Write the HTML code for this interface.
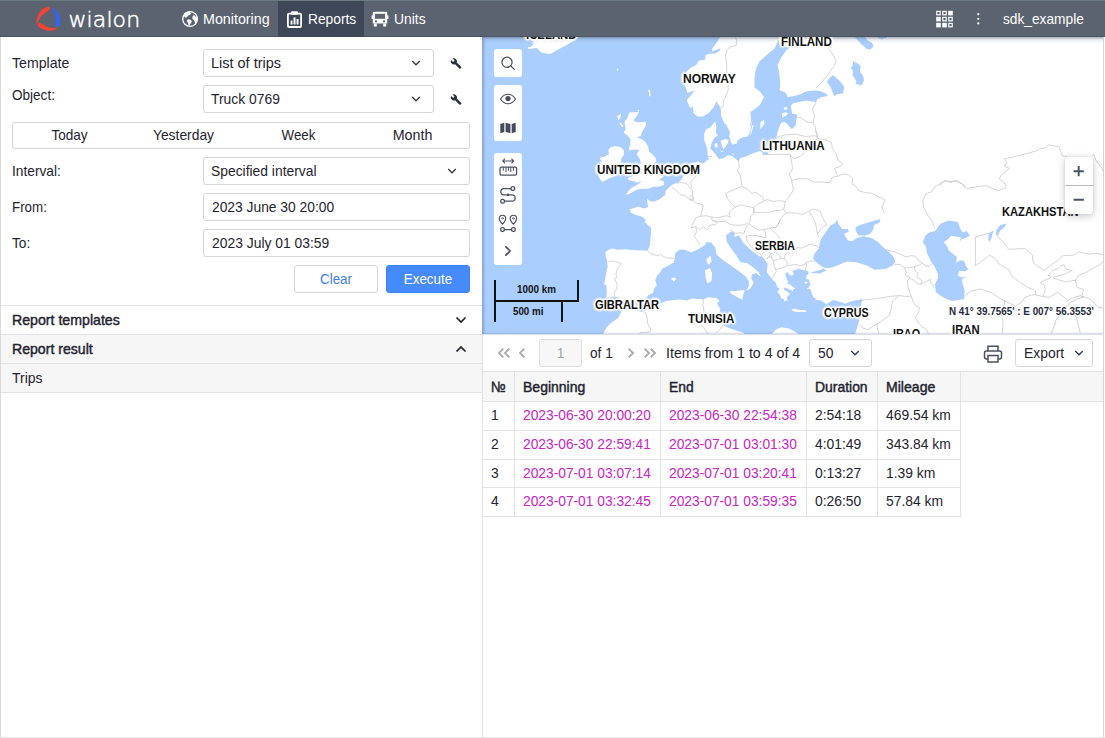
<!DOCTYPE html>
<html lang="en">
<head>
<meta charset="utf-8">
<title>Wialon</title>
<style>
*{box-sizing:border-box;margin:0;padding:0}
html,body{width:1105px;height:738px;overflow:hidden;background:#fff}
body{font-family:"Liberation Sans",sans-serif;font-size:14px;color:#1f2430;position:relative}
.abs{position:absolute}
.t{position:absolute;white-space:nowrap;line-height:16px;height:16px}
#hdr{position:absolute;left:0;top:0;width:1105px;height:37px;z-index:5;background:#5b6270;border-top:1px solid #6b7a82;border-bottom:1px solid #4e5562}
#hdr .t{color:#fff}
#tabact{position:absolute;left:278px;top:0;width:86px;height:36px;background:#3e4758}
.box{position:absolute;border:1px solid #d6d6d6;border-radius:3px;background:#fff}
.hl{position:absolute;height:1px;background:#e2e3e6}
.vl{position:absolute;width:1px;background:#e2e3e6}
#map{position:absolute;left:482px;top:37px;width:623px;height:297px;background:#aacefd;overflow:hidden}
.mbtn{position:absolute;left:12px;width:28px;background:#fff;border-radius:3px}
.lbl{position:absolute;transform-origin:0 0;white-space:nowrap;font-weight:bold;font-size:12px;line-height:14px;color:#111;text-shadow:-1px -1px 1px #fff,1px -1px 1px #fff,-1px 1px 1px #fff,1px 1px 1px #fff,0 -2px 2px #fff,0 2px 2px #fff,-2px 0 2px #fff,2px 0 2px #fff,0 0 4px #fff,0 0 3px #fff}
.pink{color:#d325c2}
.gr{background:#f6f6f6}
.md{font-weight:normal;-webkit-text-stroke:0.45px #1f2430}
</style>
</head>
<body>

<div id="hdr">
<div id="tabact"></div>
<svg class="abs" style="left:30px;top:1px" width="40" height="34" viewBox="0 0 868 738">
  <path d="M432 108 C370 95 290 130 215 215 C160 290 135 380 140 465 C160 470 172 455 178 440 C190 380 230 310 300 255 C350 215 410 190 430 165 C440 145 440 125 432 108 Z" fill="#f84330"/>
  <path d="M438 108 C500 130 580 190 630 290 C660 370 660 460 640 505 C620 535 585 540 565 520 C545 495 550 460 562 420 C570 340 540 240 480 165 C462 140 445 122 438 108 Z" fill="#2f63fb"/>
  <path d="M160 490 C165 465 195 452 225 458 C270 475 320 525 400 552 C470 572 550 570 602 552 C570 595 500 625 420 625 C330 620 250 590 190 545 C168 525 158 508 160 490 Z" fill="#f84330"/>
</svg>
<div class="t" id="logo" style="left:68.5px;top:3.5px;height:30px;line-height:30px;font-family:'DejaVu Sans',sans-serif;font-size:22px;font-weight:200;letter-spacing:0.1px;-webkit-text-stroke:0.55px #fff">wialon</div>

<svg class="abs" style="left:181px;top:9px" width="18" height="18" viewBox="0 0 18 18">
  <circle cx="9.08" cy="9.03" r="7.35" fill="none" stroke="#fff" stroke-width="1.3"/>
  <path d="M2.92 4.10 L4.15 2.51 L6.62 1.81 L9.08 2.16 L9.96 3.57 L9.08 4.80 L7.32 5.51 L6.62 6.56 L5.21 6.92 L5.56 7.97 L4.15 7.62 L3.10 6.21 Z M6.27 9.73 L8.03 9.20 L9.79 10.08 L10.85 11.14 L10.14 12.90 L9.08 14.31 L8.56 15.72 L7.50 15.37 L6.97 12.90 L6.09 11.14 Z M11.55 6.56 L12.61 5.15 L14.01 5.51 L14.72 6.92 L15.77 7.62 L16.13 10.08 L15.42 12.55 L14.37 13.96 L13.66 11.85 L12.61 10.08 L11.37 8.68 Z" fill="#fff"/>
</svg>
<div class="t" style="left:203px;top:10px;font-size:15px;transform:translateY(-.3px) scaleX(0.951);transform-origin:0 50%">Monitoring</div>

<svg class="abs" style="left:286px;top:9px" width="17" height="18" viewBox="0 0 17 18">
  <rect x="1.9" y="3.6" width="13.2" height="13.4" rx="1" fill="none" stroke="#fff" stroke-width="1.8"/>
  <rect x="5" y="1.2" width="7" height="3.6" rx="1" fill="#fff"/>
  <rect x="4.6" y="10.5" width="1.9" height="4" fill="#fff"/>
  <rect x="7.6" y="7.4" width="1.9" height="7.1" fill="#fff"/>
  <rect x="10.6" y="9" width="1.9" height="5.5" fill="#fff"/>
</svg>
<div class="t" style="left:308px;top:10px;font-size:15px;transform:translateY(-.3px) scaleX(0.918);transform-origin:0 50%">Reports</div>

<svg class="abs" style="left:371px;top:10px" width="18" height="17" viewBox="0 0 18 17">
  <path d="M3.2 0.8 H14.8 C15.7 0.8 16.2 1.4 16.2 2.2 V12.6 H1.8 V2.2 C1.8 1.4 2.3 0.8 3.2 0.8 Z" fill="#fff"/>
  <rect x="3.9" y="2.8" width="10.2" height="5" fill="#5b6270"/>
  <rect x="0.6" y="4.4" width="1.4" height="3.6" fill="#fff"/>
  <rect x="16" y="4.4" width="1.4" height="3.6" fill="#fff"/>
  <circle cx="5" cy="10.3" r="1.1" fill="#5b6270"/>
  <circle cx="13" cy="10.3" r="1.1" fill="#5b6270"/>
  <rect x="2.8" y="12.4" width="3" height="3.2" rx="0.5" fill="#fff"/>
  <rect x="12.2" y="12.4" width="3" height="3.2" rx="0.5" fill="#fff"/>
</svg>
<div class="t" style="left:394px;top:10px;font-size:15px;transform:translateY(-.3px) scaleX(0.925);transform-origin:0 50%">Units</div>

<svg class="abs" style="left:935px;top:8px" width="19" height="19" viewBox="0 0 19 19">
  <g fill="none" stroke="#fff" stroke-width="1.2">
    <rect x="1.8" y="2.4" width="3.4" height="3.4"/><rect x="7.8" y="2.4" width="3.4" height="3.4"/>
    <rect x="7.8" y="8.4" width="3.4" height="3.4"/><rect x="13.8" y="8.4" width="3.4" height="3.4"/>
    <rect x="13.8" y="14.4" width="3.4" height="3.4"/>
  </g>
  <g fill="#fff">
    <rect x="13.2" y="1.8" width="4.6" height="4.6"/>
    <rect x="1.2" y="7.8" width="4.6" height="4.6"/>
    <rect x="1.2" y="13.8" width="4.6" height="4.6"/><rect x="7.2" y="13.8" width="4.6" height="4.6"/>
  </g>
</svg>
<svg class="abs" style="left:975px;top:10px" width="6" height="18" viewBox="0 0 6 18">
  <circle cx="3.3" cy="3.2" r="1.15" fill="#fff"/><circle cx="3.3" cy="7.8" r="1.15" fill="#fff"/><circle cx="3.3" cy="12.4" r="1.15" fill="#fff"/>
</svg>
<div class="t" style="left:1003px;top:10px;font-size:15px;transform:translateY(-.3px) scaleX(0.915);transform-origin:0 50%">sdk_example</div>
</div>

<div id="left" class="abs" style="left:0;top:36px;width:482px;height:702px;background:#fff">
<div class="t" style="left:12px;top:19px;font-size:15px;transform:translateY(-.3px) scaleX(0.943);transform-origin:0 50%">Template</div>
<div class="t" style="left:12px;top:51px;font-size:15px;transform:translateY(-.3px) scaleX(0.903);transform-origin:0 50%">Object:</div>
<div class="box" style="left:203px;top:13px;width:231px;height:28px"></div>
<div class="t" style="left:211px;top:19px;font-size:15px;transform:translateY(-.3px) scaleX(0.965);transform-origin:0 50%">List of trips</div>
<div class="box" style="left:203px;top:49px;width:231px;height:28px"></div>
<div class="t" style="left:211px;top:55px;font-size:15px;transform:translateY(-.3px) scaleX(0.925);transform-origin:0 50%">Truck 0769</div>
<svg class="abs" style="left:410px;top:23px" width="12" height="8" viewBox="0 0 12 8"><path d="M2.2 2 L6 5.8 L9.8 2" fill="none" stroke="#353b4a" stroke-width="1.35"/></svg>
<svg class="abs" style="left:410px;top:59px" width="12" height="8" viewBox="0 0 12 8"><path d="M2.2 2 L6 5.8 L9.8 2" fill="none" stroke="#353b4a" stroke-width="1.35"/></svg>
<svg class="abs" style="left:450px;top:21px" width="12.5" height="12.5" viewBox="0 0 14 14"><path d="M12.6 11.2 L7.6 6.2 C8.1 4.9 7.8 3.4 6.8 2.4 C5.7 1.3 4.1 1.1 2.8 1.7 L5.1 4 L3.5 5.6 L1.2 3.3 C0.5 4.6 0.8 6.2 1.9 7.3 C2.9 8.3 4.4 8.6 5.7 8.1 L10.7 13.1 C10.9 13.3 11.3 13.3 11.5 13.1 L12.6 12 C12.9 11.8 12.9 11.4 12.6 11.2 Z" fill="#2a3040"/></svg>
<svg class="abs" style="left:450px;top:57px" width="12.5" height="12.5" viewBox="0 0 14 14"><path d="M12.6 11.2 L7.6 6.2 C8.1 4.9 7.8 3.4 6.8 2.4 C5.7 1.3 4.1 1.1 2.8 1.7 L5.1 4 L3.5 5.6 L1.2 3.3 C0.5 4.6 0.8 6.2 1.9 7.3 C2.9 8.3 4.4 8.6 5.7 8.1 L10.7 13.1 C10.9 13.3 11.3 13.3 11.5 13.1 L12.6 12 C12.9 11.8 12.9 11.4 12.6 11.2 Z" fill="#2a3040"/></svg>

<div class="box" style="left:12px;top:86px;width:458px;height:27px"></div>
<div class="t" style="left:12px;top:91px;width:115px;text-align:center;font-size:15px;transform:translateY(-.3px) scaleX(0.904);transform-origin:50% 50%">Today</div>
<div class="t" style="left:126px;top:91px;width:115px;text-align:center;font-size:15px;transform:translateY(-.3px) scaleX(0.924);transform-origin:50% 50%">Yesterday</div>
<div class="t" style="left:241px;top:91px;width:115px;text-align:center;font-size:15px;transform:translateY(-.3px) scaleX(0.890);transform-origin:50% 50%">Week</div>
<div class="t" style="left:355px;top:91px;width:115px;text-align:center;font-size:15px;transform:translateY(-.3px) scaleX(0.952);transform-origin:50% 50%">Month</div>

<div class="t" style="left:12px;top:127px;font-size:15px;transform:translateY(-.3px) scaleX(0.916);transform-origin:0 50%">Interval:</div>
<div class="box" style="left:203px;top:121px;width:267px;height:28px"></div>
<div class="t" style="left:211px;top:127px;font-size:15px;transform:translateY(-.3px) scaleX(0.924);transform-origin:0 50%">Specified interval</div>
<svg class="abs" style="left:446px;top:131px" width="12" height="8" viewBox="0 0 12 8"><path d="M2.2 2 L6 5.8 L9.8 2" fill="none" stroke="#353b4a" stroke-width="1.35"/></svg>

<div class="t" style="left:12px;top:163px;font-size:15px;transform:translateY(-.3px) scaleX(0.891);transform-origin:0 50%">From:</div>
<div class="box" style="left:203px;top:157px;width:267px;height:28px"></div>
<div class="t" style="left:212px;top:163px;font-size:15px;transform:translateY(-.3px) scaleX(0.921);transform-origin:0 50%">2023 June 30 20:00</div>

<div class="t" style="left:12px;top:199px;font-size:15px;transform:translateY(-.3px) scaleX(0.915);transform-origin:0 50%">To:</div>
<div class="box" style="left:203px;top:193px;width:267px;height:28px"></div>
<div class="t" style="left:212px;top:199px;font-size:15px;transform:translateY(-.3px) scaleX(0.925);transform-origin:0 50%">2023 July 01 03:59</div>

<div class="box" style="left:294px;top:229px;width:84px;height:28px"></div>
<div class="t" style="left:294px;top:235px;width:84px;text-align:center;color:#3d7fe6;font-size:15px;transform:translateY(-.3px) scaleX(0.890);transform-origin:50% 50%">Clear</div>
<div class="box" style="left:386px;top:229px;width:84px;height:28px;background:#468bfd;border-color:#3b83fb"></div>
<div class="t" style="left:386px;top:235px;width:84px;text-align:center;color:#fff;font-size:15px;transform:translateY(-.3px) scaleX(0.893);transform-origin:50% 50%">Execute</div>

<div class="hl" style="left:0;top:269px;width:482px"></div>
<div class="t md" style="left:12px;top:276px;font-size:15px;transform:translateY(-.3px) scaleX(0.944);transform-origin:0 50%">Report templates</div>
<svg class="abs" style="left:455px;top:280px" width="12" height="8" viewBox="0 0 12 8"><path d="M1.5 1.5 L6 6 L10.5 1.5" fill="none" stroke="#1f2430" stroke-width="1.7"/></svg>
<div class="abs gr" style="left:0;top:298px;width:482px;height:58px"></div>
<div class="hl" style="left:0;top:298px;width:482px"></div>
<div class="t md" style="left:12px;top:305px;font-size:15px;transform:translateY(-.3px) scaleX(0.940);transform-origin:0 50%">Report result</div>
<svg class="abs" style="left:455px;top:309px" width="12" height="8" viewBox="0 0 12 8"><path d="M1.5 6.5 L6 2 L10.5 6.5" fill="none" stroke="#1f2430" stroke-width="1.7"/></svg>
<div class="hl" style="left:0;top:327px;width:482px"></div>
<div class="t" style="left:12px;top:334px;font-size:15px;transform:translateY(-.3px) scaleX(0.931);transform-origin:0 50%">Trips</div>
<div class="hl" style="left:0;top:356px;width:482px"></div>
</div>
<div class="vl" style="left:482px;top:334px;height:404px;background:#e2e2e4"></div>
<div class="vl" style="left:0;top:37px;height:701px;background:#dadada;z-index:6"></div>
<div class="vl" style="left:1103px;top:37px;height:701px;background:#d4d4d4;z-index:6"></div>
<div class="vl" style="left:1104px;top:37px;height:701px;background:#fff;z-index:6"></div>
<div class="hl" style="left:0;top:737px;width:1105px;background:#e6e6e6;z-index:6"></div>
<div class="hl" style="left:483px;top:334px;width:621px;background:#e0e0e0;z-index:6"></div>

<div id="map">
<svg class="abs" style="left:0;top:0" width="623" height="297" viewBox="482 37 623 297">
<path fill="#fff" d="M720.6 34.6 L720.6 36.0 L716.6 42.8 L712.5 48.2 L711.8 51.6 L720.6 48.2 L719.3 50.9 L715.2 53.6 L711.2 53.6 L705.7 55.0 L705.1 59.7 L699.0 60.4 L696.3 65.1 L690.8 67.8 L686.8 71.2 L685.4 75.3 L684.7 84.8 L687.4 92.9 L694.9 90.2 L689.5 97.0 L686.8 99.7 L688.1 103.7 L690.2 107.8 L692.9 107.1 L693.5 113.2 L697.6 116.6 L703.0 116.6 L708.4 113.2 L713.9 107.1 L716.6 101.0 L717.9 103.7 L720.6 107.8 L721.3 115.9 L724.7 124.0 L725.9 124.1 L730.0 132.3 L729.3 136.3 L730.6 141.1 L732.0 144.4 L736.7 143.8 L737.4 140.4 L741.5 137.7 L748.2 136.3 L750.3 130.9 L751.6 124.1 L752.6 118.7 L749.8 128.1 L751.1 118.6 L750.4 111.8 L753.1 110.5 L759.9 105.1 L761.3 102.4 L764.0 97.0 L759.9 91.5 L754.5 87.5 L754.5 76.6 L756.5 67.2 L759.9 61.1 L766.7 55.0 L774.8 48.2 L778.2 40.1 L780.9 46.2 L790.1 47.5 L787.0 49.5 L780.9 57.7 L777.5 65.1 L779.6 75.3 L780.2 83.4 L779.6 90.2 L784.6 91.9 L786.5 93.8 L787.4 97.1 L793.1 96.2 L800.7 94.3 L804.5 91.9 L808.3 90.9 L815.9 90.5 L819.7 90.9 L825.4 93.3 L827.8 95.2 L825.9 96.6 L821.6 97.1 L819.2 98.5 L816.9 99.5 L816.4 101.9 L812.1 101.4 L806.4 100.4 L798.8 101.9 L793.1 103.3 L790.8 105.7 L791.7 110.9 L792.2 113.7 L796.9 114.2 L796.7 118.5 L796.0 122.3 L795.5 126.1 L791.7 128.9 L789.3 126.5 L786.5 123.2 L783.6 121.8 L780.8 123.2 L778.9 128.0 L777.5 131.7 L776.5 137.4 L775.9 143.1 L772.3 150.7 L768.5 152.1 L767.5 155.0 L763.2 155.0 L761.8 152.1 L759.0 151.2 L752.3 153.6 L745.7 156.4 L740.0 158.3 L738.8 161.4 L736.1 159.3 L732.0 156.0 L727.9 155.3 L723.9 158.0 L719.1 159.3 L715.7 154.6 L713.0 151.2 L710.3 148.5 L711.7 143.1 L714.4 137.7 L717.8 135.6 L715.7 132.3 L716.4 126.8 L715.1 121.4 L710.3 127.5 L706.3 128.9 L704.2 133.6 L704.2 140.4 L706.9 147.2 L707.6 152.6 L707.6 155.3 L709.0 159.3 L706.3 160.7 L703.5 163.4 L698.1 162.1 L694.1 162.7 L690.0 163.4 L697.0 165.0 L690.2 170.4 L683.5 175.8 L680.1 181.3 L671.3 185.3 L665.8 190.7 L665.2 194.9 L659.1 199.6 L653.7 201.7 L649.6 201.0 L647.6 198.7 L646.9 200.3 L648.2 207.1 L644.2 208.4 L641.5 207.8 L638.8 206.4 L634.7 207.8 L630.0 209.1 L630.6 212.5 L634.7 214.5 L641.5 216.6 L645.5 219.3 L644.9 222.0 L648.2 225.4 L651.0 227.4 L651.0 234.2 L650.3 241.0 L649.6 246.4 L647.6 250.4 L644.2 250.4 L634.7 250.2 L625.2 249.3 L617.1 249.8 L613.0 248.4 L610.3 249.1 L605.6 251.8 L605.6 255.8 L606.9 259.9 L607.6 266.7 L606.8 270.1 L605.2 278.8 L604.1 284.2 L606.3 285.3 L606.8 291.8 L606.3 297.8 L613.9 296.7 L618.2 296.7 L620.4 298.9 L624.8 301.6 L627.5 304.9 L630.2 303.8 L635.6 302.2 L642.1 301.6 L645.4 298.4 L648.6 295.1 L653.0 292.9 L654.1 288.6 L656.8 285.3 L655.2 279.9 L657.3 275.5 L661.1 271.2 L661.7 269.0 L668.2 265.8 L673.6 262.5 L675.3 258.2 L674.0 261.3 L674.7 258.6 L675.3 253.1 L679.4 249.8 L684.8 249.8 L691.6 252.5 L698.4 249.1 L705.1 245.0 L706.5 242.0 L711.4 242.8 L715.4 247.7 L716.3 254.2 L722.8 259.9 L730.9 265.6 L739.0 271.3 L745.5 276.2 L748.8 281.0 L748.8 285.9 L746.3 290.8 L750.4 288.4 L753.7 282.7 L751.2 278.6 L752.0 274.5 L756.1 272.9 L761.0 277.0 L758.5 272.1 L752.0 266.4 L747.2 263.2 L740.7 262.3 L735.0 253.4 L730.1 246.9 L726.8 242.0 L726.0 235.5 L730.9 231.4 L735.0 233.1 L734.1 237.1 L739.0 235.5 L743.9 243.6 L752.0 251.0 L760.2 256.7 L761.6 256.0 L765.7 260.9 L767.7 264.1 L767.3 268.2 L766.9 272.3 L769.8 276.3 L772.2 279.6 L775.9 282.8 L777.1 286.9 L779.5 288.5 L778.3 290.6 L777.5 291.4 L777.9 292.6 L779.9 295.0 L781.5 299.1 L783.2 298.3 L784.4 301.5 L786.0 300.3 L788.0 300.7 L786.8 298.3 L787.6 295.8 L790.1 294.6 L788.5 292.6 L785.2 290.6 L783.6 289.3 L784.4 287.7 L787.6 288.5 L790.9 290.1 L793.3 291.8 L792.9 289.7 L795.0 288.5 L792.5 286.5 L790.1 284.5 L787.6 284.0 L785.6 284.5 L788.5 282.8 L787.6 280.4 L786.0 277.1 L785.2 273.5 L786.4 272.3 L788.0 272.7 L790.1 275.5 L793.3 275.1 L793.7 273.5 L792.1 271.0 L795.8 269.4 L799.0 269.0 L802.3 269.4 L804.7 270.6 L808.0 271.0 L808.8 272.7 L808.0 274.3 L806.3 276.3 L805.9 278.8 L808.8 279.6 L809.6 282.0 L810.4 284.5 L808.8 286.9 L807.6 288.5 L810.4 289.3 L811.2 291.8 L812.0 294.2 L813.7 297.5 L816.9 298.7 L814.5 300.3 L818.5 299.9 L821.8 301.1 L825.0 303.2 L826.7 304.0 L830.7 301.5 L833.2 299.9 L836.4 300.7 L840.0 301.9 L845.5 303.8 L850.4 301.4 L855.3 300.6 L862.6 298.9 L861.0 304.6 L860.2 310.3 L859.3 320.1 L856.9 328.2 L854.5 336.3 L1110.0 340.0 L1110.0 30.0 Z M616.8 69.0 L618.2 68.8 L618.3 70.3 L617.0 70.4 Z M648.0 90.2 L649.6 89.5 L650.5 92.9 L650.3 96.5 L649.1 96.3 L649.2 92.9 Z M637.7 110.2 L639.0 109.8 L639.3 111.3 L637.9 111.6 Z M603.0 338.5 L603.0 334.2 L606.3 327.7 L610.6 323.3 L618.2 317.9 L621.0 312.5 L622.0 309.8 L623.1 308.1 L628.0 310.3 L637.8 310.3 L641.0 311.9 L646.5 310.3 L655.2 308.1 L660.6 303.8 L666.0 301.1 L674.7 300.0 L680.1 299.4 L686.7 300.5 L692.1 298.4 L697.5 298.9 L702.9 299.4 L708.1 297.3 L716.3 298.1 L719.5 300.6 L717.1 303.8 L720.3 308.7 L719.5 313.6 L722.8 324.9 L729.3 328.2 L743.9 333.1 L745.5 339.6 Z M769.7 336.7 L771.5 334.0 L776.0 329.4 L781.4 327.3 L788.7 328.5 L794.1 331.2 L798.6 334.0 L800.5 336.7 Z M629.3 112.5 L638.8 111.9 L636.7 116.3 L633.3 120.3 L636.7 122.3 L645.5 121.7 L646.2 125.1 L642.1 131.8 L640.8 135.9 L636.7 137.2 L642.1 139.3 L645.5 142.0 L648.2 146.7 L648.9 151.5 L652.3 154.2 L655.7 158.2 L656.4 161.6 L653.7 163.7 L657.7 164.3 L663.1 166.4 L665.8 170.4 L665.2 174.5 L661.8 177.9 L659.1 179.9 L663.8 181.3 L664.2 184.7 L659.1 186.7 L653.7 186.7 L648.2 188.7 L641.5 188.7 L636.1 190.1 L629.3 194.1 L625.9 194.8 L628.6 190.7 L632.0 187.4 L637.4 184.7 L642.1 181.3 L637.4 182.6 L633.3 181.3 L628.6 179.9 L627.9 177.9 L633.3 175.8 L636.1 173.8 L639.4 167.7 L636.1 165.0 L640.8 163.7 L640.1 159.6 L636.7 154.2 L639.4 150.1 L634.7 149.4 L628.6 150.4 L630.0 144.7 L630.6 139.3 L627.9 135.9 L623.9 132.5 L625.5 129.1 L624.5 121.7 L627.2 118.3 Z M610.3 147.4 L615.1 146.1 L621.2 147.4 L623.9 150.8 L623.9 154.9 L621.8 157.6 L620.9 161.0 L621.4 165.0 L620.5 170.4 L619.1 173.8 L615.7 175.8 L609.0 178.6 L602.2 181.9 L600.2 179.2 L598.1 175.8 L599.5 170.4 L598.4 165.0 L601.5 161.0 L599.5 157.6 L603.5 156.9 L609.0 154.2 L608.3 150.1 Z M617.1 116.3 L621.2 113.5 L620.5 117.6 L618.7 120.3 Z M619.1 122.3 L621.8 123.7 L623.6 127.1 L621.8 126.8 Z M525.8 34.6 L525.8 37.1 L533.8 41.1 L531.6 42.9 L534.5 42.5 L530.9 46.9 L528.0 47.2 L528.3 48.9 L536.7 47.9 L541.7 52.7 L550.4 54.1 L556.2 50.5 L564.9 46.1 L572.1 41.8 L576.8 37.4 L577.9 34.6 Z M720.5 141.1 L725.2 139.0 L728.6 139.7 L727.9 143.1 L725.9 146.5 L723.2 149.2 L721.8 145.1 Z M714.4 143.8 L717.1 143.1 L717.8 147.2 L715.1 147.4 Z M719.8 149.9 L723.2 151.5 L721.8 152.3 Z M732.3 153.2 L734.0 153.9 L733.1 155.6 Z M752.3 125.6 L753.8 125.1 L750.9 134.6 L750.0 135.1 Z M760.4 122.3 L763.7 119.9 L764.5 122.7 L762.3 127.0 L760.4 128.9 Z M781.7 113.7 L785.5 112.3 L788.4 113.2 L785.5 116.1 L782.2 117.5 Z M783.6 107.6 L786.5 107.1 L787.0 109.4 L784.6 109.9 Z M729.3 291.6 L737.4 290.8 L744.7 290.0 L743.1 295.7 L742.3 299.7 L737.4 297.3 L731.7 294.0 Z M704.9 270.5 L709.8 268.0 L712.2 272.9 L711.4 281.0 L707.3 283.5 L705.7 277.8 Z M706.5 259.1 L710.6 255.8 L711.4 261.5 L708.9 264.8 L706.8 262.3 Z M791.3 309.3 L794.1 308.7 L798.2 309.7 L802.3 310.1 L806.3 310.5 L805.9 312.1 L802.3 312.1 L797.4 312.1 L793.3 311.3 Z M670.9 278.8 L674.2 277.2 L676.3 279.3 L673.6 281.5 Z M800.0 310.0 L806.5 310.5 L806.2 311.6 L800.0 311.4 Z M804.3 282.0 L807.6 281.6 L807.2 283.6 L804.7 283.2 Z M806.7 288.1 L808.4 287.9 L808.0 289.3 Z"/>
<path fill="#aacefd" d="M837.4 219.3 L838.2 224.1 L842.3 229.0 L848.0 229.0 L848.8 231.4 L843.9 233.9 L848.0 240.4 L852.0 241.2 L856.9 238.0 L863.4 236.3 L871.5 238.0 L878.0 242.0 L882.9 246.9 L888.6 251.8 L893.5 256.7 L895.1 261.5 L892.7 265.6 L886.2 268.8 L874.8 269.7 L866.7 265.6 L861.8 264.0 L856.1 262.3 L847.2 261.5 L840.7 264.0 L835.0 266.4 L829.3 268.0 L824.4 268.0 L819.5 264.8 L815.4 261.5 L813.0 258.3 L814.6 253.4 L818.7 248.5 L820.3 240.4 L824.4 233.9 L830.1 225.8 L835.0 223.3 Z M855.3 227.4 L860.2 224.9 L868.3 222.5 L876.4 220.1 L880.5 219.3 L879.7 222.5 L874.0 224.9 L873.2 229.8 L869.9 233.9 L865.0 235.5 L858.5 235.5 L856.1 231.4 Z M810.0 272.9 L816.1 271.0 L821.8 269.4 L823.0 268.2 L826.7 270.6 L821.8 272.3 L821.4 273.5 L816.1 273.2 Z M940.7 223.6 L948.8 220.4 L957.7 222.0 L960.2 228.5 L962.6 232.6 L966.7 231.0 L969.9 235.8 L965.0 238.3 L961.8 239.1 L959.3 242.3 L961.0 237.5 L956.9 236.7 L951.2 235.8 L948.0 239.1 L943.9 242.3 L947.2 246.4 L948.8 250.5 L953.7 254.5 L956.9 257.0 L956.1 262.7 L960.2 260.2 L964.2 261.0 L965.9 265.9 L968.3 269.2 L965.0 271.6 L959.3 270.8 L957.7 275.7 L961.8 277.3 L966.7 277.0 L961.8 278.9 L962.6 283.8 L964.7 290.3 L964.2 299.3 L958.5 300.1 L952.0 300.9 L945.5 298.4 L939.8 295.2 L935.8 291.9 L935.0 284.6 L938.2 277.3 L937.4 272.4 L935.0 267.5 L930.9 261.0 L926.8 252.9 L926.0 246.4 L922.8 242.3 L925.2 235.8 L929.3 232.6 L935.0 231.0 L938.2 226.9 Z M988.6 234.2 L993.5 230.1 L991.9 236.7 L989.4 242.3 L988.3 239.9 Z M995.9 231.0 L1000.0 225.3 L1006.5 223.6 L1004.1 227.7 L1000.0 231.0 L997.6 235.8 L996.3 235.0 Z M855.2 34.6 L855.2 37.4 L861.3 44.1 L866.7 48.9 L870.7 49.5 L873.5 46.2 L872.1 42.8 L868.0 40.7 L865.3 37.4 L865.3 34.6 Z M877.5 34.6 L877.5 37.4 L881.6 39.4 L887.0 37.4 L887.0 34.6 Z M853.1 61.1 L857.9 63.8 L860.6 65.8 L859.9 71.2 L863.3 76.6 L864.0 80.7 L861.3 85.4 L855.2 83.4 L856.5 81.4 L852.5 75.3 L853.1 71.2 L850.4 67.2 L852.5 66.5 Z M832.8 75.0 L839.6 80.7 L844.3 86.8 L843.0 93.6 L836.9 94.2 L834.2 96.3 L830.8 87.5 L826.7 81.4 Z"/>
<path fill="none" stroke="#c9c9c9" stroke-width="0.8" stroke-linejoin="round" d="M738.6 160.8 L739.2 167.6 L737.2 170.3 L739.9 174.4 L741.3 181.2 L741.9 186.6 M741.9 186.6 L733.1 190.0 L725.7 193.3 L727.7 198.8 L730.4 202.8 L735.8 206.9 L741.3 204.9 L746.7 206.2 L753.5 207.6 L758.9 203.5 L764.3 200.8 L762.9 197.4 L757.5 193.3 L753.5 192.0 L752.1 194.0 L748.0 189.3 L741.9 186.6 M735.8 206.9 L731.8 209.6 L729.1 213.0 L730.4 217.0 L726.4 215.7 L721.0 217.0 L715.5 217.7 L711.5 217.0 L712.1 220.4 L718.2 221.8 L725.0 221.1 L729.1 223.8 L733.8 225.2 L741.3 225.2 L746.7 223.8 L750.1 221.8 L750.7 216.4 L753.5 213.7 L753.5 207.6 M711.5 217.0 L706.1 215.7 L700.6 216.4 L695.9 217.7 L693.2 223.1 L691.2 227.9 L695.9 226.5 L699.3 229.9 L703.3 226.5 L707.4 229.9 L710.1 225.2 L715.5 224.5 L716.9 222.5 L712.1 220.4 M671.5 186.6 L676.3 190.6 L680.3 194.7 L685.1 195.4 L689.1 199.4 L693.2 200.8 L695.9 202.8 L703.3 204.9 L702.0 211.0 L700.6 216.4 M676.3 183.2 L681.7 182.5 L687.1 183.9 L690.5 187.9 L692.5 190.6 L692.5 195.4 L693.2 200.8 M696.6 175.7 L693.2 179.1 L690.5 182.5 L691.8 186.6 L690.5 187.9 M689.8 196.7 L691.8 195.4 L693.6 197.4 L692.5 200.1 L690.1 199.4 L689.8 196.7 M695.9 226.5 L696.6 231.3 L694.5 236.7 L697.2 240.7 L700.0 244.8 M753.5 207.6 L754.5 212.3 M707.4 156.1 L712.1 156.8 M777.1 137.3 L784.4 134.9 L795.8 134.1 L805.5 136.5 L815.3 135.7 L817.7 138.1 M815.3 130.0 L817.7 138.1 L825.0 139.8 L831.5 142.2 L832.4 148.7 M766.5 154.4 L776.3 154.4 L790.1 154.4 L793.3 158.5 L799.8 156.8 L803.9 152.8 L803.1 148.7 L808.8 145.4 L817.7 138.1 M790.1 154.4 L791.7 162.5 L792.5 169.0 L789.3 173.9 L791.7 180.4 L793.3 190.2 L789.3 196.7 L785.2 201.5 L784.4 206.4 L783.6 209.7 M791.7 180.4 L799.0 178.5 L807.2 178.8 L813.7 182.0 L821.8 182.0 L829.9 182.8 L832.4 177.2 L838.0 176.3 M832.4 148.7 L836.4 154.4 L838.0 160.1 L842.9 164.1 L839.7 166.6 L834.8 168.2 L836.4 173.1 L838.0 176.3 M838.0 176.3 L842.9 173.9 L848.6 174.7 L852.7 178.8 L851.9 183.7 L855.9 186.1 L859.2 191.0 L865.7 192.6 L872.2 193.4 L876.3 195.9 L880.0 197.5 M764.2 200.7 L767.3 199.6 L773.0 201.5 L779.5 200.7 L785.2 201.5 M754.0 212.6 L760.0 212.6 L766.3 212.6 L775.9 210.7 L783.6 209.7 M783.6 209.7 L786.8 212.9 L781.1 217.8 L777.9 224.3 L776.3 226.3 M786.8 212.9 L795.8 212.9 L802.3 214.6 L808.8 211.3 L813.7 208.9 L820.2 211.3 L822.6 217.8 L826.7 225.1 L821.8 227.6 L817.7 234.1 M808.8 211.3 L813.7 218.6 L816.1 225.9 L817.7 234.1 L818.5 237.3 M749.0 223.8 L753.7 227.6 L758.5 230.0 L764.2 229.5 L769.8 228.1 L776.5 227.1 L778.4 223.8 L780.3 220.0 M746.1 236.6 L749.0 235.7 L752.8 235.2 L758.5 236.1 L763.2 237.1 L766.1 237.6 L765.6 234.2 L764.6 230.4 L764.2 229.5 M749.0 223.8 L746.6 226.6 L744.7 230.4 L744.2 233.3 M730.0 229.5 L733.8 232.3 L735.7 233.3 L739.5 232.8 L744.2 233.3 M769.8 228.1 L774.6 232.3 L778.4 236.1 L779.3 239.0 M746.1 236.6 L747.6 241.8 L750.4 245.6 L753.7 249.4 L758.5 253.2 L761.8 255.1 M761.8 255.1 L763.7 252.3 L768.0 251.3 L770.8 253.7 L768.9 256.5 L767.0 258.9 M770.8 253.7 L775.5 252.3 L779.3 255.1 L780.8 258.0 L777.4 259.8 L773.6 260.8 L771.7 258.0 L770.8 253.7 M773.6 260.8 L774.1 265.5 L775.1 268.9 L777.4 269.3 L783.1 267.4 L787.4 265.5 L786.9 261.7 L784.6 258.9 L780.8 258.0 M767.0 258.9 L768.9 256.5 L771.7 258.0 M775.1 268.9 L776.5 271.2 L774.6 274.1 L772.2 277.4 L771.3 279.3 M784.6 258.9 L785.0 255.1 L787.9 252.3 L795.5 247.5 M796.4 247.5 L802.1 248.0 L806.9 245.6 L810.6 244.2 L815.4 245.6 L818.7 247.5 M787.4 265.5 L790.7 265.1 L795.5 264.6 L800.2 265.5 L805.0 264.6 L805.9 262.7 L810.6 261.3 L814.9 260.8 M805.9 262.7 L806.9 265.5 L805.4 269.3 L805.9 271.2 M735.5 37.4 L736.9 41.4 L736.2 45.5 L730.1 46.8 L726.7 50.9 L725.4 56.3 L726.7 63.1 L726.7 69.9 L728.1 80.7 L728.1 90.2 L726.1 95.6 L723.3 101.0 L723.3 106.4 L720.6 107.8 M827.4 46.8 L830.1 50.2 L836.2 60.4 L834.2 65.8 L827.4 75.3 L820.6 83.4 L815.9 88.1 M815.9 102.4 L812.5 109.1 L814.5 115.9 L813.2 122.7 M796.3 117.3 L800.3 117.3 L807.1 122.0 L813.2 122.7 L815.2 126.7 L815.9 130.8 L817.9 136.0 M607.4 262.5 L610.1 260.9 L616.1 261.4 L621.5 264.1 L617.7 267.9 L616.1 273.4 L616.6 277.7 L614.4 279.3 L617.2 283.7 L616.6 288.6 L614.4 292.9 L614.4 296.7 M647.6 250.4 L651.0 253.8 L657.7 255.8 L660.4 254.5 L665.8 257.9 L674.0 258.3 M644.8 311.9 L647.0 316.8 L647.6 323.3 L650.8 329.8 L649.7 332.0 L640.0 332.6 L640.0 334.2 M703.5 299.4 L702.9 304.9 L704.0 311.4 L701.9 317.9 L700.8 324.4 L705.1 329.8 L708.4 334.2 M722.8 324.9 L719.5 329.8 L716.3 333.1 M935.0 228.4 L931.9 221.3 L927.9 215.2 L923.8 208.0 L922.8 200.9 L925.8 193.8 L931.9 191.7 L934.0 187.7 L941.1 182.6 L945.2 180.5 L950.3 182.6 L954.3 180.5 L961.4 183.6 L966.5 188.7 L970.6 187.7 L977.7 186.7 L985.9 185.6 L993.0 188.7 L998.1 190.7 L1006.2 187.7 L1004.2 182.6 L999.1 178.5 L1002.2 174.4 L1009.3 168.3 L1004.2 166.3 L1007.3 162.2 L1004.2 159.2 L1012.4 157.1 L1028.6 153.1 L1038.8 150.0 M1038.8 149.0 L1044.9 148.0 L1049.0 144.9 L1059.2 147.0 L1062.2 156.1 L1067.3 156.1 M1091.8 156.1 L1093.8 154.1 L1095.8 160.2 L1102.0 168.3 L1105.0 176.5 M939.1 186.1 L945.2 180.6 L951.3 181.6 L957.4 180.6 L965.5 186.1 M880.0 196.8 L885.1 199.9 L882.0 207.0 L884.1 213.1 M886.4 249.5 L893.9 251.6 L900.6 254.3 L906.1 257.0 L911.5 255.6 L915.5 256.3 L918.2 260.4 L922.3 263.1 L925.0 265.1 L929.1 266.5 L932.5 263.1 M894.5 264.4 L900.0 264.4 L904.7 267.8 L910.1 267.8 L914.2 266.5 L918.2 265.8 L922.3 263.1 M904.7 267.8 L906.1 272.6 L905.4 275.3 L910.1 278.0 L914.2 280.7 L918.2 284.1 L921.0 284.1 L921.6 280.0 L918.2 278.0 L916.9 275.3 L918.2 273.2 L915.5 271.2 L914.2 266.5 M910.1 278.0 L907.4 280.7 L908.1 287.5 L910.1 292.9 L911.5 297.0 M921.0 284.1 L926.4 281.4 L930.4 279.3 L931.1 283.4 L934.5 287.5 M860.0 301.0 L865.4 299.7 L873.5 299.0 L883.0 297.6 L891.2 296.3 L899.3 295.6 L904.7 296.3 L911.5 297.0 L913.5 302.4 L915.5 305.8 L919.6 307.8 L918.2 313.2 L915.5 317.3 L918.2 322.7 L922.3 326.7 L926.4 329.5 L928.4 333.5 M899.3 295.6 L892.5 301.0 L891.2 309.1 L889.1 315.9 L883.0 320.0 L876.9 324.0 L877.6 329.5 L879.0 333.5 M876.9 324.0 L868.1 329.5 L862.7 328.1 L860.0 324.7 M975.4 265.6 L975.4 237.1 L989.3 233.1 L991.7 232.3 M996.6 235.5 L1002.3 241.2 L1008.8 249.3 L1025.0 248.5 L1032.4 255.0 L1033.2 262.3 L1038.0 266.4 L1044.6 270.5 L1051.1 264.8 L1057.6 260.7 L1062.4 255.8 L1073.8 255.0 L1078.7 251.8 L1088.5 254.2 L1096.6 253.4 L1105.0 255.0 M975.4 265.6 L980.3 262.3 L987.6 256.7 L989.3 255.0 L995.0 258.3 L999.0 264.0 L1008.8 269.7 L1012.0 276.2 L1020.2 282.7 L1028.3 287.5 L1035.6 290.8 L1035.6 294.9 M964.9 295.7 L971.4 290.8 L981.1 289.2 L992.5 293.2 L1000.7 298.9 L1004.7 300.6 L1003.9 307.1 L1000.7 313.6 L1003.1 321.7 L1002.3 333.1 M1004.7 300.6 L1015.3 306.2 L1021.8 302.2 L1025.0 297.3 L1031.5 294.9 L1035.6 294.9 L1042.9 296.5 L1049.4 297.3 L1057.6 292.4 L1064.1 297.3 L1067.3 300.6 L1073.8 297.3 L1080.3 295.7 L1083.6 297.3 M1042.9 296.5 L1045.4 289.2 L1043.7 284.3 L1040.5 282.7 L1044.6 280.2 L1049.4 278.6 L1051.1 276.2 L1047.8 275.3 L1052.7 270.5 L1057.6 268.8 L1060.8 265.6 L1064.1 264.8 L1065.7 268.8 L1072.2 270.5 L1065.7 273.7 L1059.2 275.3 L1052.7 277.8 L1057.6 279.4 L1065.7 281.9 L1075.4 280.2 L1077.1 287.5 L1083.6 289.2 L1082.0 295.7 L1083.6 297.3 M1075.4 280.2 L1078.7 275.3 L1086.8 272.1 L1093.3 268.0 L1099.8 264.8 L1105.0 259.9 M1083.6 297.3 L1077.1 298.9 L1070.6 302.2 L1065.7 307.1 L1060.8 313.6 L1055.9 320.1 L1054.3 326.6 L1051.1 333.1 M1080.3 295.7 L1090.1 298.9 L1098.2 307.1 L1105.0 308.7 M1073.8 310.3 L1077.1 320.1 L1080.3 333.1"/>
</svg>
<div class="abs" style="left:0;top:0;width:623px;height:6px;background:linear-gradient(rgba(90,105,130,.55),rgba(120,140,170,.18) 45%,rgba(143,169,201,0))"></div>
<div class="abs" style="left:0;top:0;width:4px;height:297px;background:linear-gradient(90deg,rgba(110,135,175,.6),rgba(120,150,200,0))"></div>
<div class="abs" style="left:0;top:295px;width:623px;height:2px;background:linear-gradient(rgba(100,125,170,0),rgba(100,125,170,.3))"></div>

<div class="lbl" style="left:43.5px;top:-8.8px;transform:scaleX(0.947)">ICELAND</div>
<div class="lbl" style="left:298.7px;top:-1.9px;transform:scaleX(0.965)">FINLAND</div>
<div class="lbl" style="left:200.7px;top:34.9px;transform:scaleX(1.002)">NORWAY</div>
<div class="lbl" style="left:279.8px;top:102.1px;transform:scaleX(0.967)">LITHUANIA</div>
<div class="lbl" style="left:115.4px;top:126.1px;transform:scaleX(0.972)">UNITED KINGDOM</div>
<div class="lbl" style="left:519.8px;top:168.2px;transform:scaleX(0.930)">KAZAKHSTAN</div>
<div class="lbl" style="left:273.3px;top:202.1px;transform:scaleX(0.878)">SERBIA</div>
<div class="lbl" style="left:112.9px;top:261.1px;transform:scaleX(0.931)">GIBRALTAR</div>
<div class="lbl" style="left:206.0px;top:274.8px;transform:scaleX(0.967)">TUNISIA</div>
<div class="lbl" style="left:341.8px;top:268.5px;transform:scaleX(0.890)">CYPRUS</div>
<div class="lbl" style="left:410.6px;top:290.2px;transform:scaleX(0.903)">IRAQ</div>
<div class="lbl" style="left:470.3px;top:285.6px;transform:scaleX(0.938)">IRAN</div>

<div class="mbtn" style="top:12px;height:28px"></div>
<div class="mbtn" style="top:48px;height:56px"></div>
<div class="mbtn" style="top:116px;height:112px"></div>
<svg class="abs" style="left:12px;top:12px" width="28" height="216" viewBox="494 49 28 216" fill="none" stroke="#4a5062" stroke-width="1.25" stroke-linecap="round" stroke-linejoin="round">
  <circle cx="507" cy="62.3" r="5.1"/><path d="M510.8 66 L514.3 69.4"/>
  <path d="M500.5 99 C503 95.3 505.5 94.3 508 94.3 C510.5 94.3 513 95.3 515.5 99 C513 102.7 510.5 103.7 508 103.7 C505.5 103.7 503 102.7 500.5 99 Z" stroke-width="1.1"/>
  <circle cx="508" cy="98.6" r="2.6" fill="#454b5c" stroke="none"/>
  <g fill="#454b5c" stroke="none"><path d="M500.3 124 L504.3 122.8 V132 L500.3 133.2 Z"/><path d="M505.6 122.8 L510.4 124 V133.2 L505.6 132 Z"/><path d="M511.7 124 L515.7 122.8 V132 L511.7 133.2 Z"/></g>
  <path d="M502.8 161 H513.6 M504.6 159.2 L502.8 161 L504.6 162.8 M511.8 159.2 L513.6 161 L511.8 162.8" stroke-width="1.1"/>
  <rect x="500" y="167.2" width="16.6" height="8" rx="1.6"/>
  <path d="M503.3 167.5 V170.3 M506 167.5 V171.6 M508.4 167.5 V170.3 M510.8 167.5 V171.6 M513.4 167.5 V170.3" stroke-width="1"/>
  <circle cx="512.8" cy="188.5" r="1.9"/><circle cx="502.6" cy="201.2" r="1.9"/>
  <path d="M510.8 188.5 H504 C499.8 188.5 499.8 194.8 504 194.8 H512 C516.2 194.8 516.2 201.2 512 201.2 H504.6"/>
  <circle cx="508" cy="194.8" r="1.2" fill="#454b5c" stroke="none"/>
  <path d="M502.5 224.2 C500.2 221.6 499.3 220.2 499.3 218.4 C499.3 216.5 500.7 215.2 502.5 215.2 C504.3 215.2 505.7 216.5 505.7 218.4 C505.7 220.2 504.8 221.6 502.5 224.2 Z M513.4 224.2 C511.09999999999997 221.6 510.2 220.2 510.2 218.4 C510.2 216.5 511.59999999999997 215.2 513.4 215.2 C515.1999999999999 215.2 516.6 216.5 516.6 218.4 C516.6 220.2 515.6999999999999 221.6 513.4 224.2 Z" stroke-width="1.15"/>
  <circle cx="502.5" cy="218.3" r="0.9" stroke-width="0.7"/><circle cx="513.4" cy="218.3" r="0.9" stroke-width="0.7"/>
  <circle cx="502.5" cy="229.6" r="1.9"/><circle cx="513.4" cy="229.6" r="1.9"/><path d="M504.5 229.6 H511.4"/>
  <path d="M505.9 246.8 L510.2 251 L505.9 255.2" stroke-width="1.7"/>
</svg>

<div class="abs" style="left:12px;top:243px;width:2px;height:42px;background:#111"></div>
<div class="abs" style="left:12px;top:263px;width:85px;height:2px;background:#111"></div>
<div class="abs" style="left:95px;top:243px;width:2px;height:22px;background:#111"></div>
<div class="abs" style="left:79px;top:263px;width:2px;height:22px;background:#111"></div>
<div class="t" style="left:35.3px;top:244px;font-weight:bold;font-size:11px;color:#111;transform:scaleX(.896);transform-origin:0 0">1000 km</div>
<div class="t" style="left:31.4px;top:266px;font-weight:bold;font-size:11px;color:#111;transform:scaleX(.888);transform-origin:0 0">500 mi</div>

<div class="abs" style="left:583px;top:120px;width:28.4px;height:57px;background:#fff;border-radius:4px;box-shadow:0 2px 8px rgba(0,0,0,.22),0 0 2px rgba(0,0,0,.12)"></div>
<div class="abs" style="left:583px;top:148px;width:28.4px;height:1px;background:#b9bbc0"></div>
<svg class="abs" style="left:583px;top:120px" width="28" height="57" viewBox="0 0 28 57" stroke="#4a5163" stroke-width="1.9" fill="none"><path d="M8.6 14.2 H18.8 M13.7 9.1 V19.3 M8.6 42.7 H18.8"/></svg>

<div class="t" style="left:466.6px;top:265.5px;font-weight:bold;font-size:11px;color:#252b3e;transform:scaleX(.897);transform-origin:0 0;text-shadow:0 0 2px #fff,0 0 2px #fff,0 0 1px #fff">N 41° 39.7565' : E 007° 56.3553'</div>
</div>

<div id="tbl" class="abs" style="left:483px;top:334px;width:622px;height:404px;background:#fff">
<svg class="abs" style="left:14px;top:13px" width="8" height="12" viewBox="0 0 8 12"><path d="M6.3 1.6 L1.9 6 L6.3 10.4" fill="none" stroke="#a9abb0" stroke-width="1.8"/></svg>
<svg class="abs" style="left:20px;top:13px" width="8" height="12" viewBox="0 0 8 12"><path d="M6.3 1.6 L1.9 6 L6.3 10.4" fill="none" stroke="#a9abb0" stroke-width="1.8"/></svg>
<svg class="abs" style="left:35px;top:13px" width="8" height="12" viewBox="0 0 8 12"><path d="M6.3 1.6 L1.9 6 L6.3 10.4" fill="none" stroke="#a9abb0" stroke-width="1.8"/></svg>
<svg class="abs" style="left:144px;top:13px" width="8" height="12" viewBox="0 0 8 12"><path d="M1.7 1.6 L6.1 6 L1.7 10.4" fill="none" stroke="#a9abb0" stroke-width="1.8"/></svg>
<svg class="abs" style="left:160px;top:13px" width="8" height="12" viewBox="0 0 8 12"><path d="M1.7 1.6 L6.1 6 L1.7 10.4" fill="none" stroke="#a9abb0" stroke-width="1.8"/></svg>
<svg class="abs" style="left:166px;top:13px" width="8" height="12" viewBox="0 0 8 12"><path d="M1.7 1.6 L6.1 6 L1.7 10.4" fill="none" stroke="#a9abb0" stroke-width="1.8"/></svg>
<div class="box" style="left:56px;top:5px;width:43px;height:28px;background:#f7f7f7;border-color:#dedede"></div>
<div class="t" style="left:56.0px;top:11.0px;width:43px;text-align:center;color:#a3a5aa;font-size:15px;transform:translateY(-.3px) scaleX(0.925);transform-origin:50% 50%">1</div>
<div class="t" style="left:107.0px;top:11.0px;font-size:15px;transform:translateY(-.3px) scaleX(0.911);transform-origin:0 50%">of 1</div>
<div class="t" style="left:183.3px;top:11.0px;font-size:15px;transform:translateY(-.3px) scaleX(0.947);transform-origin:0 50%">Items from 1 to 4 of 4</div>
<div class="box" style="left:326px;top:5px;width:63px;height:28px"></div>
<div class="t" style="left:335.0px;top:11.0px;font-size:15px;transform:translateY(-.3px) scaleX(0.925);transform-origin:0 50%">50</div>
<svg class="abs" style="left:366px;top:15px" width="12" height="8" viewBox="0 0 12 8"><path d="M2.2 2 L6 5.8 L9.8 2" fill="none" stroke="#353b4a" stroke-width="1.35"/></svg>
<svg class="abs" style="left:500px;top:10px" width="20" height="20" viewBox="0 0 20 20" fill="none" stroke="#4a5162" stroke-width="1.5">
<path d="M5 7 V2.2 H15 V7"/><rect x="1.5" y="7" width="17" height="8" rx="2"/><rect x="5" y="11.5" width="10" height="6.5" fill="#fff"/></svg>
<div class="box" style="left:532px;top:5px;width:78px;height:28px"></div>
<div class="t" style="left:540.9px;top:11.0px;font-size:15px;transform:translateY(-.3px) scaleX(0.925);transform-origin:0 50%">Export</div>
<svg class="abs" style="left:590px;top:15px" width="12" height="8" viewBox="0 0 12 8"><path d="M2.2 2 L6 5.8 L9.8 2" fill="none" stroke="#353b4a" stroke-width="1.35"/></svg>
<div class="abs gr" style="left:0;top:37px;width:620px;height:30px"></div>
<div class="hl" style="left:0;top:37px;width:622px"></div>
<div class="hl" style="left:0;top:67px;width:620px"></div>
<div class="hl" style="left:0;top:96px;width:478px"></div>
<div class="hl" style="left:0;top:125px;width:478px"></div>
<div class="hl" style="left:0;top:153px;width:478px"></div>
<div class="hl" style="left:0;top:182px;width:478px"></div>
<div class="vl" style="left:31px;top:37px;height:145px"></div>
<div class="vl" style="left:177px;top:37px;height:145px"></div>
<div class="vl" style="left:323px;top:37px;height:145px"></div>
<div class="vl" style="left:394px;top:37px;height:145px"></div>
<div class="vl" style="left:477px;top:37px;height:145px"></div>
<div class="vl" style="left:620px;top:37px;height:30px"></div>
<div class="t md" style="left:8.0px;top:45.0px;font-size:15px;transform:translateY(-.3px) scaleX(0.925);transform-origin:0 50%">№</div>
<div class="t md" style="left:39.7px;top:45.0px;font-size:15px;transform:translateY(-.3px) scaleX(0.934);transform-origin:0 50%">Beginning</div>
<div class="t md" style="left:185.6px;top:45.0px;font-size:15px;transform:translateY(-.3px) scaleX(0.925);transform-origin:0 50%">End</div>
<div class="t md" style="left:332.0px;top:45.0px;font-size:15px;transform:translateY(-.3px) scaleX(0.928);transform-origin:0 50%">Duration</div>
<div class="t md" style="left:402.9px;top:45.0px;font-size:15px;transform:translateY(-.3px) scaleX(0.939);transform-origin:0 50%">Mileage</div>
<div class="t" style="left:8.0px;top:73.0px;font-size:15px;transform:translateY(-.3px) scaleX(0.925);transform-origin:0 50%">1</div>
<div class="t" style="left:39.7px;top:73.0px;color:#c824c6;font-size:15px;transform:translateY(-.3px) scaleX(0.918);transform-origin:0 50%">2023-06-30 20:00:20</div>
<div class="t" style="left:185.6px;top:73.0px;color:#c824c6;font-size:15px;transform:translateY(-.3px) scaleX(0.918);transform-origin:0 50%">2023-06-30 22:54:38</div>
<div class="t" style="left:332.0px;top:73.0px;font-size:15px;transform:translateY(-.3px) scaleX(0.925);transform-origin:0 50%">2:54:18</div>
<div class="t" style="left:402.9px;top:73.0px;font-size:15px;transform:translateY(-.3px) scaleX(0.925);transform-origin:0 50%">469.54 km</div>
<div class="t" style="left:8.0px;top:102.0px;font-size:15px;transform:translateY(-.3px) scaleX(0.925);transform-origin:0 50%">2</div>
<div class="t" style="left:39.7px;top:102.0px;color:#c824c6;font-size:15px;transform:translateY(-.3px) scaleX(0.918);transform-origin:0 50%">2023-06-30 22:59:41</div>
<div class="t" style="left:185.6px;top:102.0px;color:#c824c6;font-size:15px;transform:translateY(-.3px) scaleX(0.918);transform-origin:0 50%">2023-07-01 03:01:30</div>
<div class="t" style="left:332.0px;top:102.0px;font-size:15px;transform:translateY(-.3px) scaleX(0.925);transform-origin:0 50%">4:01:49</div>
<div class="t" style="left:402.9px;top:102.0px;font-size:15px;transform:translateY(-.3px) scaleX(0.925);transform-origin:0 50%">343.84 km</div>
<div class="t" style="left:8.0px;top:131.0px;font-size:15px;transform:translateY(-.3px) scaleX(0.925);transform-origin:0 50%">3</div>
<div class="t" style="left:39.7px;top:131.0px;color:#c824c6;font-size:15px;transform:translateY(-.3px) scaleX(0.918);transform-origin:0 50%">2023-07-01 03:07:14</div>
<div class="t" style="left:185.6px;top:131.0px;color:#c824c6;font-size:15px;transform:translateY(-.3px) scaleX(0.918);transform-origin:0 50%">2023-07-01 03:20:41</div>
<div class="t" style="left:332.0px;top:131.0px;font-size:15px;transform:translateY(-.3px) scaleX(0.925);transform-origin:0 50%">0:13:27</div>
<div class="t" style="left:402.9px;top:131.0px;font-size:15px;transform:translateY(-.3px) scaleX(0.925);transform-origin:0 50%">1.39 km</div>
<div class="t" style="left:8.0px;top:159.0px;font-size:15px;transform:translateY(-.3px) scaleX(0.925);transform-origin:0 50%">4</div>
<div class="t" style="left:39.7px;top:159.0px;color:#c824c6;font-size:15px;transform:translateY(-.3px) scaleX(0.918);transform-origin:0 50%">2023-07-01 03:32:45</div>
<div class="t" style="left:185.6px;top:159.0px;color:#c824c6;font-size:15px;transform:translateY(-.3px) scaleX(0.918);transform-origin:0 50%">2023-07-01 03:59:35</div>
<div class="t" style="left:332.0px;top:159.0px;font-size:15px;transform:translateY(-.3px) scaleX(0.925);transform-origin:0 50%">0:26:50</div>
<div class="t" style="left:402.9px;top:159.0px;font-size:15px;transform:translateY(-.3px) scaleX(0.925);transform-origin:0 50%">57.84 km</div>
</div>

</body>
</html>
